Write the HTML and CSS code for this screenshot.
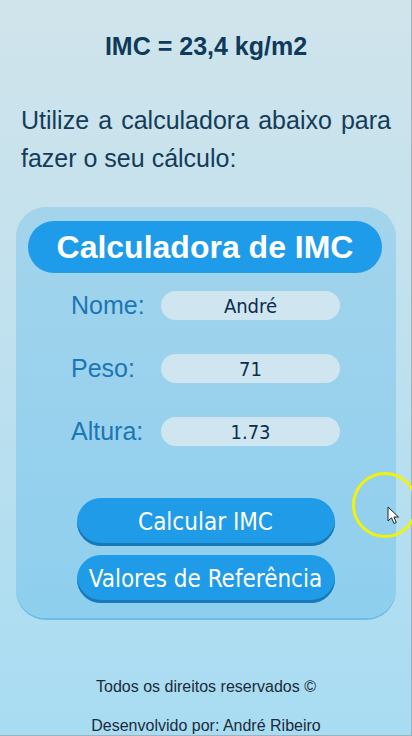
FILE: index.html
```html
<!DOCTYPE html>
<html lang="pt-BR">
<head>
<meta charset="utf-8">
<title>Calculadora de IMC</title>
<link rel="stylesheet" href="styles.css">
</head>
<body>
<main class="page">
  <h2 class="result">IMC = 23,4 kg/m2</h2>
  <p class="intro">Utilize a calculadora abaixo para fazer o seu cálculo:</p>

  <section class="card">
    <h1 class="card-title">Calculadora de IMC</h1>
    <div class="fields">
      <div class="row">
        <label class="label" for="nome">Nome:</label>
        <input class="input" id="nome" type="text" value="André">
      </div>
      <div class="row">
        <label class="label" for="peso">Peso:</label>
        <input class="input" id="peso" type="text" value="71">
      </div>
      <div class="row">
        <label class="label" for="altura">Altura:</label>
        <input class="input" id="altura" type="text" value="1.73">
      </div>
    </div>
    <div class="actions">
      <button class="btn" type="button">Calcular IMC</button>
      <button class="btn" type="button">Valores de Referência</button>
    </div>
  </section>

  <footer class="footer">
    <p class="footer-line">Todos os direitos reservados ©</p>
    <p class="footer-line">Desenvolvido por: André Ribeiro</p>
  </footer>
</main>

<div class="cursor-ring" aria-hidden="true">
  <svg class="cursor-arrow" width="14" height="20" viewBox="0 0 14 20">
    <path d="M1 1 L1 15 L4.5 11.8 L7 17.5 L9.3 16.5 L6.9 11 L11.5 11 Z" fill="#ffffff" stroke="#222" stroke-width="1" stroke-linejoin="round"/>
  </svg>
</div>
</body>
</html>
```

FILE: styles.css
```css
html, body {
  margin: 0;
  padding: 0;
}

body {
  width: 412px;
  height: 736px;
  overflow: hidden;
  background: linear-gradient(180deg, #d0e4eb 0%, #c2e1ee 40%, #a8dcf2 100%);
  box-shadow: inset -1px -1px 0 #9fb2bb;
  font-family: "Liberation Sans", Arial, sans-serif;
  position: relative;
}

.page {
  display: flex;
  flex-direction: column;
  align-items: stretch;
}

.result {
  margin: 31px 0 0;
  font-size: 25px;
  line-height: 30px;
  font-weight: 700;
  text-align: center;
  color: #0f3a5b;
}

.intro {
  margin: 41px 21px 0 21px;
  font-size: 25px;
  line-height: 37.5px;
  text-align: justify;
  color: #143c59;
}

.card {
  margin: 30px 16px 0 16px;
  padding: 14px 14px 15px 12px;
  border-radius: 30px;
  background: linear-gradient(180deg, #a3d4ec 0%, #8ecfee 100%);
  box-shadow: 0 2px 0 #6ebbe6;
  display: flex;
  flex-direction: column;
}

.card-title {
  margin: 0;
  height: 52px;
  line-height: 52px;
  border-radius: 26px;
  background: #1f9ce9;
  color: #ffffff;
  font-size: 32px;
  font-weight: 700;
  text-align: center;
}

.fields {
  margin-top: 18px;
  display: flex;
  flex-direction: column;
  gap: 34px;
  align-items: center;
}

.row {
  display: flex;
  align-items: center;
  height: 29px;
  width: 269px;
  margin-left: 1px;
}

.label {
  width: 90px;
  font-size: 25px;
  color: #1c76b6;
}

.input {
  width: 179px;
  height: 29px;
  box-sizing: border-box;
  border: none;
  border-radius: 15px;
  background: #cfe6f0;
  padding: 0;
  text-align: center;
  font-family: "DejaVu Sans Condensed", "DejaVu Sans", sans-serif;
  font-stretch: condensed;
  font-size: 20px;
  color: #0c2d4b;
  outline: none;
}

.actions {
  margin-top: 52px;
  display: flex;
  flex-direction: column;
  align-items: center;
  gap: 9px;
  margin-left: 1px;
}

.btn {
  width: 258px;
  height: 48px;
  box-sizing: border-box;
  border: none;
  border-radius: 24px;
  background: #1f9be7;
  box-shadow: inset 0 -3px 0 #1878b8;
  color: #ffffff;
  font-family: "DejaVu Sans Condensed", "DejaVu Sans", sans-serif;
  font-stretch: condensed;
  font-size: 24px;
  padding: 0;
  cursor: pointer;
}

.footer {
  margin-top: 60px;
  display: flex;
  flex-direction: column;
  align-items: center;
  gap: 21px;
}

.footer-line {
  margin: 0;
  font-size: 16px;
  line-height: 18px;
  color: #1b2b3b;
}

.cursor-ring {
  position: absolute;
  left: 352px;
  top: 472px;
  width: 66px;
  height: 66px;
  box-sizing: border-box;
  border: 3px solid #f2f20a;
  border-radius: 50%;
}

.cursor-arrow {
  position: absolute;
  left: 32px;
  top: 31px;
}
```
